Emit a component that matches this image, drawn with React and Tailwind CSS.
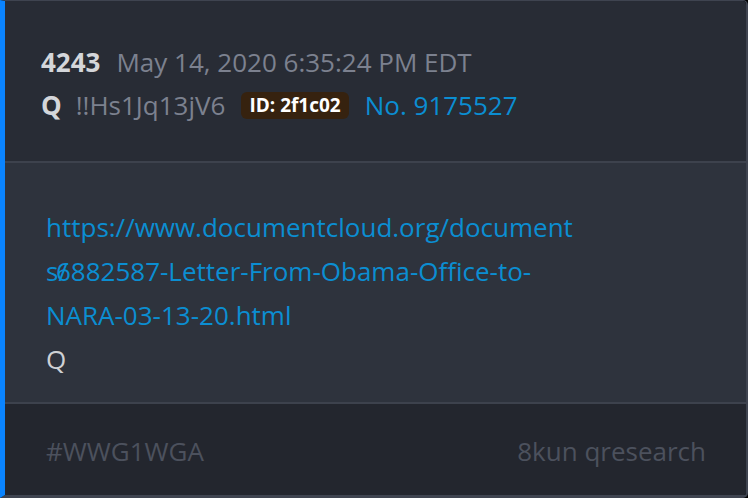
export default function App() {
  return (
    <div className="w-[748px] h-[498px] bg-black" style={{ fontFamily: '"Open Sans", sans-serif' }}>
      <div className="w-full h-full flex flex-col overflow-hidden rounded-r-[5px] border-l-[5px] border-l-[#0a84ff] border-t border-r-2 border-b-[3px] border-t-[#3f4450] border-r-[#3f4450] border-b-[#3f4450]">
        {/* Header */}
        <div className="h-[162px] shrink-0 bg-[#282c35] pl-[36px] pt-[40px] border-b-2 border-[#3d424d] text-[26px]">
          <div className="h-[43px] flex items-center gap-[16px]">
            <span className="font-bold text-[#d4d6da]">4243</span>
            <span className="text-[#7c818f]">May 14, 2020 6:35:24 PM EDT</span>
          </div>
          <div className="h-[43px] flex items-center">
            <span className="font-bold text-[#d4d6da] mr-[14px]">Q</span>
            <span className="text-[#7c818f] mr-[16px]">!!Hs1Jq13jV6</span>
            <span className="bg-[#36220f] text-white font-bold text-[19px] rounded-[6px] px-[8px] leading-[27px] mr-[16px]">ID: 2f1c02</span>
            <span className="text-[#0b8ed2]">No. 9175527</span>
          </div>
        </div>

        {/* Body */}
        <div className="flex-1 bg-[#2e333d] pl-[41px] pt-[42px] text-[26px] leading-[44px] border-b-2 border-[#3d424d]">
          <div className="text-[#0b8ed2]">
            <div>https://www.documentcloud.org/document</div>
            <div>s<span className="-mr-[12px]">/</span>6882587-Letter-From-Obama-Office-to-</div>
            <div>NARA-03-13-20.html</div>
          </div>
          <div className="text-[#cfd1d5]">Q</div>
        </div>

        {/* Footer */}
        <div className="h-[91px] shrink-0 bg-[#23262e] pl-[41px] pr-[40px] pt-[4px] flex items-center justify-between text-[26px] text-[#4c515d]">
          <span>#WWG1WGA</span>
          <span>8kun qresearch</span>
        </div>
      </div>
    </div>
  );
}
